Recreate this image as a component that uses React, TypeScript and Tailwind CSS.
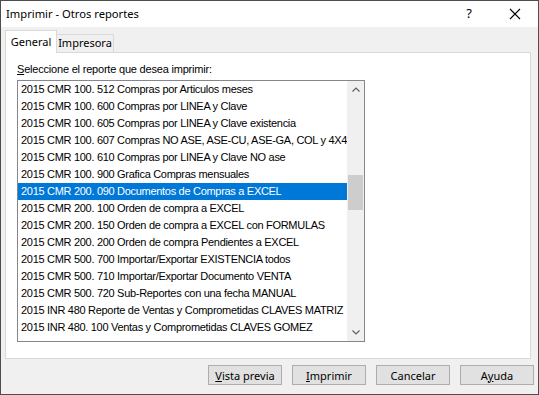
import React from "react";

const reports = [
  "2015 CMR 100. 512 Compras por Articulos meses",
  "2015 CMR 100. 600 Compras por LINEA y Clave",
  "2015 CMR 100. 605 Compras por LINEA y Clave existencia",
  "2015 CMR 100. 607 Compras NO ASE, ASE-CU, ASE-GA, COL y 4X4",
  "2015 CMR 100. 610 Compras por LINEA y Clave NO ase",
  "2015 CMR 100. 900 Grafica Compras mensuales",
  "2015 CMR 200. 090 Documentos de Compras a EXCEL",
  "2015 CMR 200. 100 Orden de compra a EXCEL",
  "2015 CMR 200. 150 Orden de compra a EXCEL con FORMULAS",
  "2015 CMR 200. 200 Orden de compra Pendientes a EXCEL",
  "2015 CMR 500. 700 Importar/Exportar EXISTENCIA todos",
  "2015 CMR 500. 710 Importar/Exportar Documento VENTA",
  "2015 CMR 500. 720 Sub-Reportes con una fecha MANUAL",
  "2015 INR 480 Reporte de Ventas y Comprometidas CLAVES MATRIZ",
  "2015 INR 480. 100 Ventas y Comprometidas CLAVES GOMEZ",
];

const ui = { fontFamily: '"Noto Sans", "Open Sans", sans-serif' };
const list = { fontFamily: '"Liberation Sans", Arial, sans-serif' };

function Btn({ children }: { children: React.ReactNode }) {
  return (
    <button className="w-[74px] h-[20px] bg-[#e1e1e1] border border-[#adadad] text-[11px] leading-none text-black">
      {children}
    </button>
  );
}

export default function App() {
  const selected = 6;
  return (
    <div
      className="w-[539px] h-[395px] border border-[#4d4d4d] bg-[#f0f0f0] flex flex-col overflow-hidden"
      style={ui}
    >
      {/* title bar */}
      <div className="h-[26px] bg-white flex items-center shrink-0">
        <span className="pl-[5px] text-[11.2px] text-black">Imprimir - Otros reportes</span>
        <span className="ml-auto w-[46px] text-center text-[13px] text-black">?</span>
        <span className="w-[45px] flex justify-center mr-[1px]">
          <svg width="12" height="12" viewBox="0 0 12 12">
            <path d="M1 1 L11 11 M11 1 L1 11" stroke="#000" strokeWidth="1.1" />
          </svg>
        </span>
      </div>

      {/* tabs */}
      <div className="pl-[4px] pt-[2px] flex items-end h-[25px] shrink-0">
        <div className="h-[23px] w-[52px] justify-center bg-white border border-b-0 border-[#d9d9d9] text-[11px] flex items-center relative top-[1px] z-10">
          General
        </div>
        <div className="h-[18px] w-[57px] justify-center bg-[#f0f0f0] border border-l-0 border-b-0 border-[#d9d9d9] text-[11px] flex items-center">
          Impresora
        </div>
      </div>

      {/* panel */}
      <div className="ml-[4px] w-[526px] h-[307px] bg-white border border-[#d9d9d9] shrink-0 pl-[11px] pt-[8px]">
        <div className="text-[11px] tracking-[-0.2px] text-black leading-[17px]" style={list}>
          <span className="underline">S</span>eleccione el reporte que desea imprimir:
        </div>
        <div className="mt-[2px] w-[348px] h-[262px] border border-[#828790] flex">
          <div className="flex-1 min-w-0 flex flex-col" style={list}>
            {reports.map((r, i) => (
              <div
                key={r}
                className={
                  "h-[17px] leading-[17px] pl-[3px] text-[11px] tracking-[-0.3px] whitespace-nowrap overflow-hidden " +
                  (i === selected ? "bg-[#0078d7] text-white" : "text-black")
                }
              >
                {r}
              </div>
            ))}
          </div>
          <div className="w-[17px] shrink-0 bg-[#f0f0f0] flex flex-col items-center">
            <div className="h-[17px] flex items-center justify-center">
              <svg width="8" height="5" viewBox="0 0 8 5">
                <path d="M0.5 4.5 L4 1 L7.5 4.5" stroke="#606060" strokeWidth="1.2" fill="none" />
              </svg>
            </div>
            <div className="mt-[77px] w-[15px] h-[35px] bg-[#cdcdcd]" />
            <div className="mt-auto h-[17px] flex items-center justify-center">
              <svg width="8" height="5" viewBox="0 0 8 5">
                <path d="M0.5 0.5 L4 4 L7.5 0.5" stroke="#606060" strokeWidth="1.2" fill="none" />
              </svg>
            </div>
          </div>
        </div>
      </div>

      {/* buttons */}
      <div className="flex justify-end gap-[10px] pr-[4px] pt-[6px]">
        <Btn>
          <span className="underline">V</span>ista previa
        </Btn>
        <Btn>
          <span className="underline">I</span>mprimir
        </Btn>
        <Btn>Cancelar</Btn>
        <Btn>
          A<span className="underline">y</span>uda
        </Btn>
      </div>
    </div>
  );
}
